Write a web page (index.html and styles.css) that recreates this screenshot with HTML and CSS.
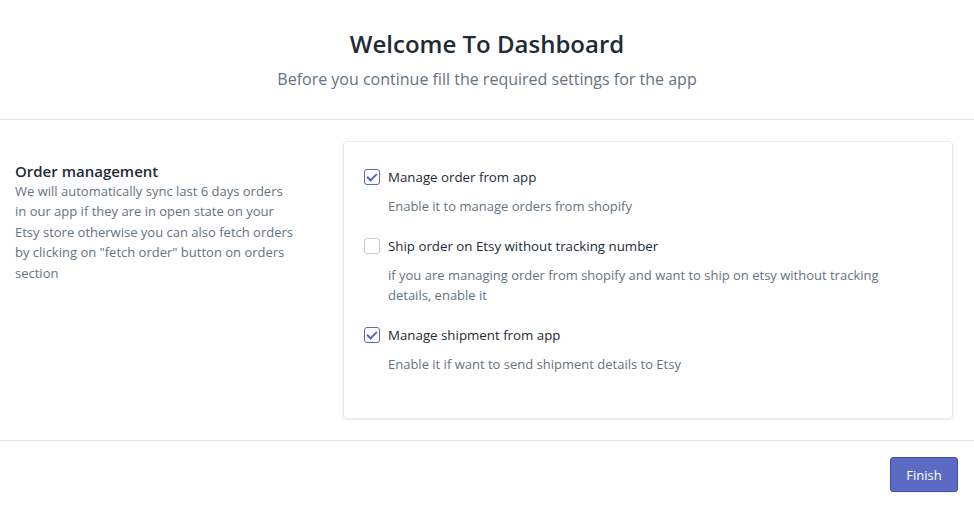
FILE: index.html
```html
<!DOCTYPE html>
<html lang="en">
<head>
  <meta charset="UTF-8">
  <title>Welcome To Dashboard</title>
  <link rel="stylesheet" href="styles.css">
</head>
<body>

  <header class="welcome">
    <h1>Welcome To Dashboard</h1>
    <p>Before you continue fill the required settings for the app</p>
  </header>

  <section class="settings">
    <div class="settings-info">
      <h2>Order management</h2>
      <p>We will automatically sync last 6 days orders in our app if they are in open state on your Etsy store otherwise you can also fetch orders by clicking on "fetch order" button on orders section</p>
    </div>

    <div class="card">
      <div class="option">
        <label class="check">
          <input type="checkbox" checked>
          <span class="box"></span>
          Manage order from app
        </label>
        <p class="help">Enable it to manage orders from shopify</p>
      </div>

      <div class="option">
        <label class="check">
          <input type="checkbox">
          <span class="box"></span>
          Ship order on Etsy without tracking number
        </label>
        <p class="help">if you are managing order from shopify and want to ship on etsy without tracking details, enable it</p>
      </div>

      <div class="option">
        <label class="check">
          <input type="checkbox" checked>
          <span class="box"></span>
          Manage shipment from app
        </label>
        <p class="help">Enable it if want to send shipment details to Etsy</p>
      </div>
    </div>
  </section>

  <footer class="actions">
    <button>Finish</button>
  </footer>

</body>
</html>
```

FILE: styles.css
```css
body {
  margin: 0;
  background-color: #ffffff;
  color: #212b36;
  font-family: "Open Sans", "Noto Sans", sans-serif;
}
.welcome {
  height: 120px;
  box-sizing: border-box;
  padding-top: 29px;
  text-align: center;
  border-bottom: 1px solid #dfe3e8;
}
.welcome h1 {
  margin: 0;
  font-size: 24px;
  line-height: 30px;
  font-weight: 600;
}
.welcome p {
  margin: 5px 0 0;
  font-size: 16px;
  line-height: 30px;
  color: #637381;
}
.settings {
  display: flex;
  align-items: flex-start;
  padding: 21px 21px 21px 15px;
  border-bottom: 1px solid #dfe3e8;
}
.settings-info {
  width: 282px;
  padding-top: 20px;
  margin-right: 46px;
}
.settings-info h2 {
  margin: 0;
  font-size: 15px;
  line-height: 20px;
  font-weight: 600;
}
.settings-info p {
  margin: 0;
  font-size: 13px;
  line-height: 20.4px;
  color: #637381;
}
.card {
  flex: 1;
  padding: 25px 20px 44px;
  border: 1px solid #e8eaed;
  border-radius: 4px;
  box-shadow: 0 1px 2px rgba(63, 63, 68, 0.12);
}
.option + .option {
  margin-top: 20px;
}
.check {
  display: flex;
  align-items: center;
  font-size: 13.3px;
  line-height: 20px;
  cursor: pointer;
}
.check input {
  display: none;
}
.box {
  width: 14px;
  height: 14px;
  margin-right: 8px;
  border: 1px solid #c4cdd5;
  border-radius: 3px;
  background: #ffffff;
  position: relative;
}
.check input:checked + .box {
  border-color: #5c6ac4;
}
.check input:checked + .box::after {
  content: "";
  position: absolute;
  left: 4px;
  top: 1px;
  width: 4px;
  height: 8px;
  border: solid #5c6ac4;
  border-width: 0 2px 2px 0;
  transform: rotate(45deg);
}
.help {
  max-width: 510px;
  margin: 9px 0 0 24px;
  font-size: 13px;
  line-height: 20px;
  color: #637381;
}
.actions {
  display: flex;
  justify-content: flex-end;
  padding: 16px 16px;
}
.actions button {
  width: 68px;
  height: 35px;
  background-color: #5c6ac4;
  color: white;
  font-family: inherit;
  font-size: 13px;
  border: 1px solid #3f4eae;
  border-radius: 3px;
  box-shadow: 0 1px 0 rgba(22, 29, 37, 0.05);
  cursor: pointer;
}
```
